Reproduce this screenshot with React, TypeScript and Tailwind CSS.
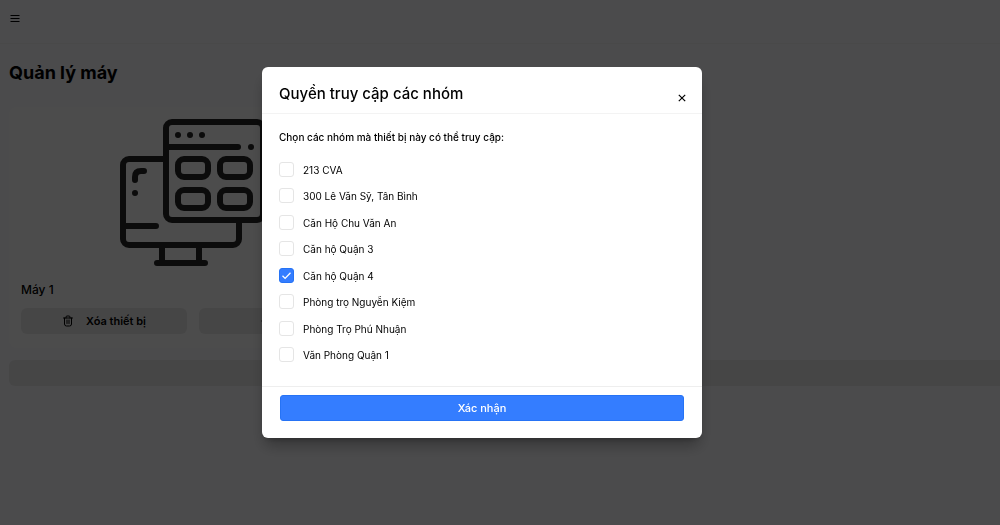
import { useState } from "react";
import { Eye } from "lucide-react";

const GROUPS = [
  "213 CVA",
  "300 Lê Văn Sỹ, Tân Bình",
  "Căn Hộ Chu Văn An",
  "Căn hộ Quận 3",
  "Căn hộ Quận 4",
  "Phòng trọ Nguyễn Kiệm",
  "Phòng Trọ Phú Nhuận",
  "Văn Phòng Quận 1",
];

const DeviceImage = () => (
  <svg
    viewBox="0 0 146 148"
    className="h-[148px] w-[146px]"
    fill="none"
    stroke="#262626"
    strokeWidth="6"
    strokeLinecap="round"
    strokeLinejoin="round"
    aria-hidden="true"
  >
    {/* monitor */}
    <path d="M43 40H9a6 6 0 0 0-6 6v74a6 6 0 0 0 6 6h104a6 6 0 0 0 6-6v-18" />
    <path d="M3 107h33M42 127v17M79 127v17M37 144h48" />
    <path d="M15 61v-3q0-6 6-6h3" />
    {/* browser window */}
    <rect x="46" y="3" width="97" height="98" rx="6" />
    <path d="M46 28h72" />
    <rect x="58" y="40" width="30" height="18" rx="6" />
    <rect x="100" y="40" width="30" height="18" rx="6" />
    <rect x="58" y="71" width="30" height="18" rx="6" />
    <rect x="100" y="71" width="30" height="18" rx="6" />
    <path d="M15 74h.01M58 16h.01M70 16h.01M82 16h.01M131 28h.01" />
  </svg>
);

const MenuIcon = () => (
  <svg viewBox="0 0 12 12" className="size-3" stroke="currentColor" aria-hidden="true">
    <path d="M1.5 3.5h9M1.5 6.5h9M1.5 9.5h9" />
  </svg>
);

const TrashIcon = () => (
  <svg
    viewBox="0 0 24 24"
    className="size-3"
    fill="none"
    stroke="currentColor"
    strokeWidth="2"
    strokeLinecap="round"
    strokeLinejoin="round"
    aria-hidden="true"
  >
    <path d="M3 6h18M8 6V4a2 2 0 0 1 2-2h4a2 2 0 0 1 2 2v2M5 6v12a4 4 0 0 0 4 4h6a4 4 0 0 0 4-4V6M10 10v7M14 10v7" />
  </svg>
);

const DevicePage = () => (
  <div className="min-h-screen overflow-hidden bg-[#fafaff] text-black">
    <header className="flex h-11 items-center border-b border-[#f4f4f6] px-2">
      <button type="button" aria-label="Menu" className="mb-2 p-px">
        <MenuIcon />
      </button>
    </header>
    <main className="pt-[15px] pl-[9px]">
      <h1 className="text-lg leading-7 font-bold">Quản lý máy</h1>
      <section className="mt-5 w-[368px] rounded-lg bg-white px-3 pt-3 pb-[14px]">
        <div className="flex justify-center pb-[13px]">
          <DeviceImage />
        </div>
        <h2 className="text-xs leading-5 font-medium">Máy 1</h2>
        <div className="mt-2 grid grid-cols-2 gap-3">
          <button
            type="button"
            className="flex h-[26px] items-center justify-center gap-3 rounded-md bg-[#ebebeb] text-[11px] font-semibold"
          >
            <TrashIcon />
            Xóa thiết bị
          </button>
          <button
            type="button"
            aria-label="Quyền truy cập"
            className="flex h-[26px] items-center justify-center rounded-md bg-[#ebebeb] pr-7"
          >
            <Eye className="size-[14px]" />
          </button>
        </div>
      </section>
      <div className="mt-3 h-[26px] rounded-l-md bg-[#ebebeb]" />
    </main>
  </div>
);

const AccessDialog = () => {
  const [selected, setSelected] = useState<string[]>(["Căn hộ Quận 4"]);

  const toggle = (name: string) => {
    setSelected((prev) =>
      prev.includes(name) ? prev.filter((g) => g !== name) : [...prev, name]
    );
  };

  return (
    <form
      role="dialog"
      aria-labelledby="dialog-title"
      onSubmit={(e) => e.preventDefault()}
      className="w-full max-w-[440px] rounded-md bg-white text-black shadow-lg shadow-black/30"
    >
      <header className="flex h-[47px] items-center justify-between border-b border-[#f3f3f3] pr-4 pl-[17px]">
        <h2 id="dialog-title" className="pt-2 text-[15px] leading-6 font-medium">
          Quyền truy cập các nhóm
        </h2>
        <button type="button" aria-label="Đóng" className="mt-4 -mr-1 p-1">
          <svg viewBox="0 0 8 8" className="size-2" stroke="currentColor" strokeWidth="1.2">
            <path d="M.8.8l6.4 6.4M7.2.8L.8 7.2" />
          </svg>
        </button>
      </header>
      <div className="px-[17px] pt-[15px] pb-[23px]">
        <p id="groups-label" className="text-[10px] leading-4 font-medium">
          Chọn các nhóm mà thiết bị này có thể truy cập:
        </p>
        <div
          role="group"
          aria-labelledby="groups-label"
          className="mt-[17px] flex min-h-[201px] flex-col justify-between"
        >
          {GROUPS.map((name) => (
            <label key={name} className="flex items-center gap-2 text-[10px] leading-4">
              <span className="relative flex size-4">
                <input
                  type="checkbox"
                  checked={selected.includes(name)}
                  onChange={() => toggle(name)}
                  className="peer size-[15px] appearance-none rounded-[3px] border border-[#e5e5e5] checked:border-[#2673f5] checked:bg-[#347dff]"
                />
                <svg
                  viewBox="0 0 15 15"
                  className="pointer-events-none absolute top-0 left-0 hidden size-[15px] peer-checked:block"
                  fill="none"
                  stroke="#fff"
                  strokeWidth="1.3"
                >
                  <path d="M3.5 7.8l2.6 2.6 5.4-5.6" />
                </svg>
              </span>
              {name}
            </label>
          ))}
        </div>
      </div>
      <footer className="border-t border-[#eee] px-[18px] pt-2 pb-[17px]">
        <button
          type="submit"
          className="block h-[26px] w-full rounded-[3px] border border-[#2673f5] bg-[#347dff] text-[11px] font-medium text-white"
        >
          Xác nhận
        </button>
      </footer>
    </form>
  );
};

const App = () => (
  <div className="font-[Inter,sans-serif]">
    <DevicePage />
    <div className="fixed inset-0 flex items-start justify-center bg-black/70 pt-[67px] pr-9">
      <AccessDialog />
    </div>
  </div>
);

export default App;
